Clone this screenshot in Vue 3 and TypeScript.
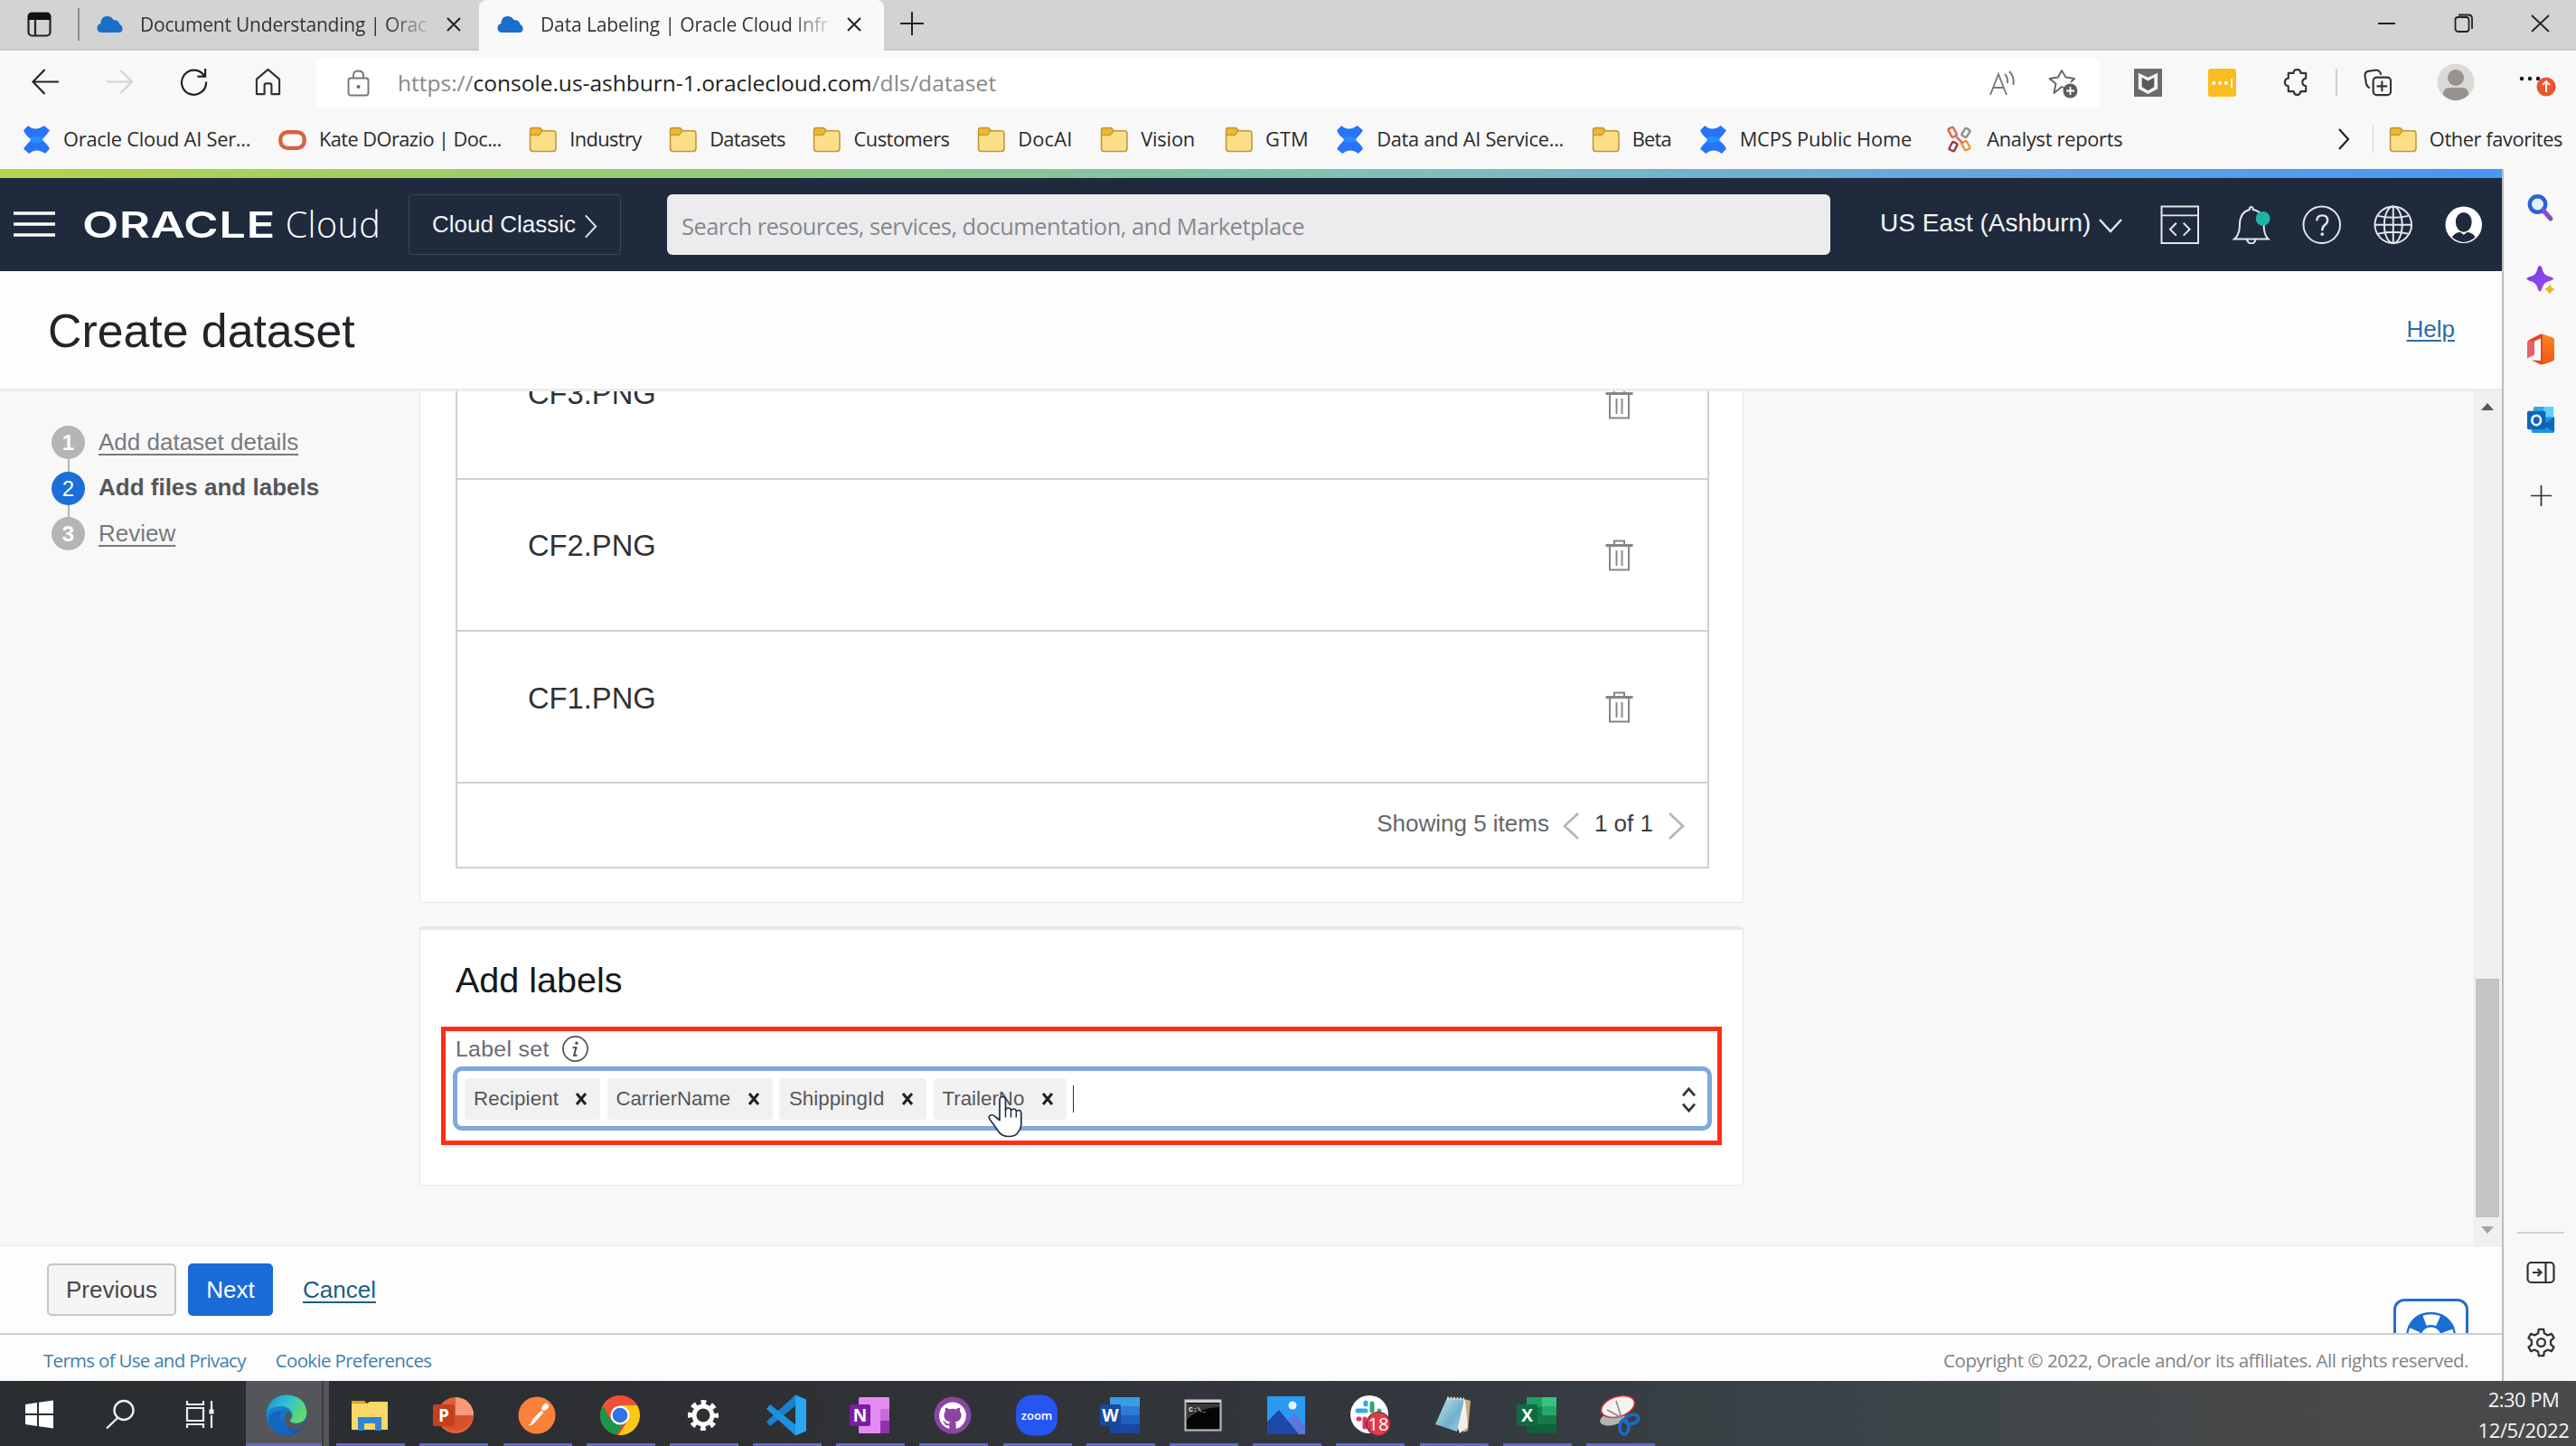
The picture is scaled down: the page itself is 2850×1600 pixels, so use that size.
<script setup lang="ts">
import type { Directive } from 'vue'

interface Bookmark {
  icon: 'confluence' | 'oracle' | 'folder' | 'analyst'
  text: string
  width: number
  gapAfter?: 'small' | 'wide'
}

interface Tag {
  text: string
  textWidth: number
  width: number
}

/* Tracks a line of text so that it fills the given measure. */
const vFit: Directive<HTMLElement, number> = {
  mounted(el, binding) {
    const length = (el.textContent || '').length
    el.style.letterSpacing = `${(binding.value - el.offsetWidth) / length}px`
  },
}

const bookmarks: Bookmark[] = [
  { icon: 'confluence', text: 'Oracle Cloud AI Ser...', width: 207 },
  { icon: 'oracle', text: 'Kate DOrazio | Doc...', width: 202 },
  { icon: 'folder', text: 'Industry', width: 79 },
  { icon: 'folder', text: 'Datasets', width: 84 },
  { icon: 'folder', text: 'Customers', width: 106 },
  { icon: 'folder', text: 'DocAI', width: 60 },
  { icon: 'folder', text: 'Vision', width: 60, gapAfter: 'small' },
  { icon: 'folder', text: 'GTM', width: 47 },
  { icon: 'confluence', text: 'Data and AI Service...', width: 207 },
  { icon: 'folder', text: 'Beta', width: 43 },
  { icon: 'confluence', text: 'MCPS Public Home', width: 191, gapAfter: 'wide' },
  { icon: 'analyst', text: 'Analyst reports', width: 150 },
]

const files: string[] = ['CF3.PNG', 'CF2.PNG', 'CF1.PNG']

const tags: Tag[] = [
  { text: 'Recipient', textWidth: 94, width: 150 },
  { text: 'CarrierName', textWidth: 127, width: 183 },
  { text: 'ShippingId', textWidth: 105, width: 163 },
  { text: 'TrailerNo', textWidth: 91, width: 147 },
]

const cogPath = (teeth: number, outer: number, inner: number): string => {
  const points: string[] = []
  const step = (Math.PI * 2) / teeth
  for (let i = 0; i < teeth; i++) {
    const mid = i * step - Math.PI / 2
    const corners: [number, number][] = [
      [-0.3, inner],
      [-0.17, outer],
      [0.17, outer],
      [0.3, inner],
    ]
    for (const [offset, radius] of corners) {
      const angle = mid + offset * step
      points.push(`${(16 + radius * Math.cos(angle)).toFixed(2)} ${(16 + radius * Math.sin(angle)).toFixed(2)}`)
    }
  }
  return `M${points.join('L')}Z`
}
const settingsCog = cogPath(6, 14.5, 10.5)
</script>

<template>
  <div class="screen">
    <svg class="defs" width="0" height="0">
      <defs>
        <linearGradient id="edgeA" x1="0" y1="0" x2="1" y2="0.4"><stop offset="0" stop-color="#1b8fd8" /><stop offset=".55" stop-color="#35c1d0" /><stop offset="1" stop-color="#5fdc6a" /></linearGradient>
        <linearGradient id="edgeB" x1="0" y1="0" x2="0.6" y2="1"><stop offset="0" stop-color="#1a9be0" /><stop offset="1" stop-color="#1156b4" /></linearGradient>
        <linearGradient id="spark" x1="0" y1="0" x2="1" y2="1"><stop offset="0" stop-color="#6a3fe0" /><stop offset="1" stop-color="#a24cf0" /></linearGradient>
        <linearGradient id="office" x1="0" y1="0" x2="0" y2="1"><stop offset="0" stop-color="#f98a1c" /><stop offset="1" stop-color="#f0531c" /></linearGradient>
        <linearGradient id="note" x1="0" y1="0" x2="1" y2="1"><stop offset="0" stop-color="#c8e4ee" /><stop offset=".6" stop-color="#6fb0cc" /><stop offset="1" stop-color="#a8d4e4" /></linearGradient>
        <symbol id="i-confluence" viewBox="0 0 30 30">
          <path d="M1 5 6 0c4 4 10 5 17 0l6 5C24 13 20 15 15 15 9 15 4 12 1 5Z" fill="#2675f5" />
          <path d="M29 25l-5 5c-5-4-11-5-17 0l-6-5c5-8 9-10 14-10 6 0 11 3 14 10Z" fill="#2675f5" />
          <path d="M7 13 Q15 10 23 13 Q20 15 23 17 Q15 20 7 17 Q10 15 7 13Z" fill="#2a8cff" />
        </symbol>
        <symbol id="i-oracle" viewBox="0 0 30 30">
          <rect x="2.200" y="7" width="25.600" height="17" rx="7.500" fill="none" stroke="#d9603f" stroke-width="4.200" />
        </symbol>
        <symbol id="i-folder" viewBox="0 0 30 30">
          <path d="M1.500 5q0-2.500 2.500-2.500h8l3 3h11q3 0 3 3v16q0 3-3 3H4.500q-3 0-3-3Z" fill="#fbdf86" stroke="#c0953a" stroke-width="1.500" />
          <path d="M1.500 9V5q0-2.500 2.500-2.500h7.500l3 3L11 10H1.500Z" fill="#efb92f" stroke="#c0953a" stroke-width="1.200" />
        </symbol>
        <symbol id="i-analyst" viewBox="0 0 30 30">
          <g fill="none" stroke-width="2.300">
            <rect x="4" y="2" width="6" height="10" rx="1.500" transform="rotate(-28 7 7)" stroke="#e0664a" />
            <rect x="18" y="3" width="6" height="9" rx="1.500" transform="rotate(32 21 8)" stroke="#8e8e90" />
            <rect x="5" y="18" width="6" height="9" rx="1.500" transform="rotate(28 8 22)" stroke="#9b3a44" />
            <rect x="18" y="17" width="6" height="9" rx="1.500" transform="rotate(-28 21 21)" stroke="#f0952f" />
            <path d="m11 12 7 7" stroke="#e0664a" />
          </g>
        </symbol>
        <symbol id="i-cloud" viewBox="0 0 30 20">
          <path d="M6 19q-5 0-5-5 0-4 4-5Q5 1 12 1q5 0 7 4 6 0 7 5 3 1 3 5 0 4-4 4Z" fill="#1b6fc8" />
        </symbol>
        <symbol id="i-x" viewBox="0 0 16 16">
          <path d="M1 1l14 14M15 1 1 15" stroke="#222" stroke-width="2" fill="none" />
        </symbol>
        <symbol id="i-trash" viewBox="0 0 30 36">
          <g fill="none" stroke="#868686">
            <path d="M0 6.500h30" stroke-width="3" />
            <path d="M9.500 5V1.500h11V5" stroke-width="2" />
            <path d="M4.500 7v26.500h21V7" stroke-width="2" />
            <path d="M12 12v17M18 12v17" stroke-width="1.900" />
          </g>
        </symbol>
      </defs>
    </svg>

    <!-- Tab strip -->
    <div class="tabs">
      <svg class="workspace" viewBox="0 0 28 28"><rect x="1.500" y="1.500" width="24" height="25" rx="4" fill="none" stroke="#222" stroke-width="2.200" /><path d="M1 9V5q0-4 4-4h17q4 0 4 4v4Z" fill="#111" /><path d="M9 8v18" stroke="#222" stroke-width="2.200" /></svg>
      <i class="tab-rule"></i>
      <div class="tab first">
        <svg class="cloud"><use href="#i-cloud" /></svg>
        <div class="tab-text"><span v-fit="317">Document Understanding | Orac</span></div>
        <svg class="tab-x"><use href="#i-x" /></svg>
      </div>
      <div class="tab active">
        <svg class="cloud"><use href="#i-cloud" /></svg>
        <div class="tab-text"><span v-fit="318">Data Labeling | Oracle Cloud Infr</span></div>
        <svg class="tab-x"><use href="#i-x" /></svg>
      </div>
      <svg class="new-tab" viewBox="0 0 26 26"><path d="M13 0v26M0 13h26" stroke="#222" stroke-width="2" /></svg>
      <div class="window-controls">
        <svg viewBox="0 0 22 22"><path d="M1 11h19" stroke="#222" stroke-width="2" /></svg>
        <svg viewBox="0 0 22 22"><rect x="1.500" y="4" width="15" height="16" rx="3" fill="none" stroke="#222" stroke-width="1.800" /><path d="M5 1.500h11q4 0 4 4V17" fill="none" stroke="#222" stroke-width="1.800" /></svg>
        <svg viewBox="0 0 22 22"><path d="M1 2l19 18M20 2 1 20" stroke="#222" stroke-width="1.800" /></svg>
      </div>
    </div>

    <!-- Address row -->
    <div class="toolbar">
      <div class="nav">
        <svg viewBox="0 0 32 32"><path d="M31 16H2M15 2 1.500 16 15 30" fill="none" stroke="#222" stroke-width="2.200" /></svg>
        <svg viewBox="0 0 32 32"><path d="M1 16h29M17 3l13 13-13 13" fill="none" stroke="#d2d2d2" stroke-width="2.200" /></svg>
        <svg viewBox="0 0 32 32"><path d="M28 9.500A14 14 0 1 0 30 16M29 1v9h-9" fill="none" stroke="#222" stroke-width="2.300" /></svg>
        <svg viewBox="0 0 32 32"><path d="M3 13 16 2l13 11v17h-9V20q0-2-2-2h-4q-2 0-2 2v10H3Z" fill="none" stroke="#333" stroke-width="2.200" stroke-linejoin="round" /></svg>
      </div>
      <div class="address">
        <svg class="lock" viewBox="0 0 26 30"><rect x="1.500" y="9.500" width="22" height="19" rx="2.500" fill="none" stroke="#777" stroke-width="1.900" /><path d="M7 9V6.500q0-5 5.500-5t5.500 5V9" fill="none" stroke="#777" stroke-width="1.900" /><circle cx="12.500" cy="19" r="2" fill="#666" /></svg>
        <div class="url"><span v-fit="84" class="dim">https://</span><span v-fit="441">console.us-ashburn-1.oraclecloud.com</span><span v-fit="138" class="dim">/dls/dataset</span></div>
        <svg class="read" viewBox="0 0 30 28"><path d="M1 27 10 4l9 23M4.500 19h11" fill="none" stroke="#777" stroke-width="1.900" /><path d="M17 4q4 4 3 10M22 1q6 6 4.500 15" fill="none" stroke="#777" stroke-width="1.900" /></svg>
        <svg class="star" viewBox="0 0 34 32"><path d="M19 21l-4-2-8.500 7 2-10.500L1.500 10l9.500-1.500L15 1l4.500 7.500L29 10l-4 4" fill="none" stroke="#666" stroke-width="1.900" stroke-linejoin="round" /><circle cx="24.500" cy="23.500" r="8" fill="#5d5d5d" /><path d="M24.500 19v9M20 23.500h9" stroke="#fff" stroke-width="1.800" /></svg>
      </div>
      <div class="extensions">
        <svg class="ext" viewBox="0 0 32 32"><rect width="32" height="32" fill="#6b6b6b" /><path d="M5 5l11 5 11-5v18l-11 6L5 23Z" fill="#f4f4f4" /><path d="M9 10l7 4 7-4v11l-7 4-7-4Z" fill="#5a5a5a" /></svg>
        <svg class="ext" viewBox="0 0 32 32"><rect width="32" height="32" rx="3" fill="#fbbc1d" /><g fill="#fff"><circle cx="6.500" cy="16.500" r="2.200" /><circle cx="13.500" cy="16.500" r="2.200" /><circle cx="20.500" cy="16.500" r="2.200" /><rect x="26" y="11" width="1.800" height="11" /></g></svg>
        <svg class="ext" viewBox="0 0 32 32"><path d="M7 5h6q0-4 4-4t4 4h6v6q-4 1-4 4.500t4 4.500v6h-6q-1 4-4 4t-4-4H7v-6q-4-.5-4-4.500T7 11Z" fill="none" stroke="#333" stroke-width="2.200" stroke-linejoin="round" /></svg>
        <i class="ext-rule"></i>
        <svg class="ext" viewBox="0 0 32 32"><rect x="11" y="10" width="20" height="20" rx="4" fill="none" stroke="#333" stroke-width="2.200" /><path d="M21 14v12M15 20h12M7 22Q4 21 3 17L1.500 8q0-4 3-5l10-1.500q4 0 5.500 5.500" fill="none" stroke="#333" stroke-width="2.200" /></svg>
        <svg class="profile" viewBox="0 0 42 42"><circle cx="21" cy="21" r="20.500" fill="#dcd9d6" /><circle cx="21" cy="16" r="9" fill="#96928e" /><path d="M7 35q0-8 7-8h14q7 0 7 8-14 12-28 0Z" fill="#96928e" /></svg>
        <svg class="more" viewBox="0 0 44 32"><g fill="#111"><circle cx="3" cy="12" r="2.200" /><circle cx="12" cy="12" r="2.200" /><circle cx="21" cy="12" r="2.200" /></g><circle cx="30" cy="21" r="10.500" fill="#f0542d" /><path d="M30 27V15.500M26 19l4-4 4 4" stroke="#fff" stroke-width="1.900" fill="none" /></svg>
      </div>
    </div>

    <!-- Bookmarks -->
    <div class="bookmarks">
      <div v-for="b in bookmarks" :key="b.text" class="bookmark" :class="b.gapAfter">
        <svg class="bm-icon"><use :href="'#i-' + b.icon" /></svg>
        <span v-fit="b.width">{{ b.text }}</span>
      </div>
      <svg class="bm-more" viewBox="0 0 14 24"><path d="M2 1l10 11L2 23" fill="none" stroke="#222" stroke-width="2.200" /></svg>
      <i class="bm-rule"></i>
      <div class="bookmark">
        <svg class="bm-icon"><use href="#i-folder" /></svg>
        <span v-fit="147">Other favorites</span>
      </div>
    </div>

    <div class="body">
      <div class="page">
        <div class="strip"></div>
        <header class="header">
          <svg class="menu" viewBox="0 0 46 30"><path d="M0 3h46M0 15h46M0 27h46" stroke="#fff" stroke-width="3.600" /></svg>
          <div class="logo">
            <span v-fit="161" class="logo-word">ORACLE</span>
            <span v-fit="105" class="logo-cloud">Cloud</span>
          </div>
          <div class="classic">Cloud Classic<svg viewBox="0 0 16 28"><path d="M2 1l12 13L2 27" fill="none" stroke="#e8eaee" stroke-width="2" /></svg></div>
          <div class="search"><span v-fit="689">Search resources, services, documentation, and Marketplace</span></div>
          <div class="region">US East (Ashburn)<svg viewBox="0 0 28 16"><path d="M2 1l12 13L26 1" fill="none" stroke="#e8eaee" stroke-width="2.400" /></svg></div>
          <div class="head-icons">
            <svg viewBox="0 0 44 44"><g fill="none" stroke="#e4e7ec" stroke-width="2"><rect x="1.500" y="1.500" width="41" height="41" /><path d="M1 11.500h42M18 20l-7 7 7 7M26 20l7 7-7 7" /></g></svg>
            <svg viewBox="0 0 44 44"><g fill="none" stroke="#e4e7ec" stroke-width="2"><path d="M3 38h38q-5-5-5-16Q36 7 24 5q0-3-2-3t-2 3Q9 8 9 22q0 11-6 16Z" /><path d="M17 38q1 5 5 5t5-5" /></g><circle cx="35" cy="15" r="8" fill="#1fb5a6" /></svg>
            <svg viewBox="0 0 44 44"><circle cx="22" cy="22" r="20.500" fill="none" stroke="#e4e7ec" stroke-width="2" /><path d="M16.500 17.500q0-6 6-6t6 5.500q0 3-3.500 5.500-2.500 2-2.500 6" fill="none" stroke="#e4e7ec" stroke-width="2.400" /><circle cx="22.500" cy="32.500" r="1.800" fill="#e4e7ec" /></svg>
            <svg viewBox="0 0 44 44"><g fill="none" stroke="#e4e7ec" stroke-width="2"><circle cx="22" cy="22" r="20.500" /><ellipse cx="22" cy="22" rx="10" ry="20.500" /><path d="M22 1.500v41M1.500 22h41M5 12q17 4 34 0M5 32q17-4 34 0" /></g></svg>
            <svg viewBox="0 0 44 44"><circle cx="22" cy="22" r="20.500" fill="#fff" /><ellipse cx="22" cy="19" rx="9" ry="11" fill="#1f2a3c" /><path d="M9 36q2-5 9-6l4 3 4-3q7 1 9 6-13 11-26 0Z" fill="#1f2a3c" /></svg>
          </div>
        </header>

        <div class="title-bar">
          <h1>Create dataset</h1>
          <a class="help">Help</a>
        </div>

        <div class="content">
          <nav class="steps">
            <div class="step"><b>1</b><a>Add dataset details</a></div>
            <i class="link"></i>
            <div class="step current"><b>2</b><a>Add files and labels</a></div>
            <i class="link"></i>
            <div class="step"><b>3</b><a>Review</a></div>
          </nav>
          <main class="cards">
            <section class="card files">
              <div class="table">
                <div v-for="file in files" :key="file" class="row">
                  <span>{{ file }}</span>
                  <svg class="trash"><use href="#i-trash" /></svg>
                </div>
                <div class="pager">
                  <span class="showing">Showing 5 items</span>
                  <svg viewBox="0 0 18 30"><path d="M17 1 2 15l15 14" fill="none" stroke="#b4b4b4" stroke-width="2.600" /></svg>
                  <span class="count">1 of 1</span>
                  <svg viewBox="0 0 18 30"><path d="M1 1l15 14L1 29" fill="none" stroke="#b4b4b4" stroke-width="2.600" /></svg>
                </div>
              </div>
            </section>
            <section class="card labels">
              <h2>Add labels</h2>
              <div class="highlight">
                <div class="field-label"><span v-fit="104">Label set</span>
                  <svg viewBox="0 0 32 32"><circle cx="16" cy="16" r="14" fill="none" stroke="#555" stroke-width="1.800" /><circle cx="17.500" cy="9.500" r="1.700" fill="#444" /><path d="M13 14.500h4l-2.500 9h3.500" fill="none" stroke="#444" stroke-width="1.900" /></svg>
                </div>
                <div class="input">
                  <div v-for="tag in tags" :key="tag.text" class="tag" :style="{ width: tag.width + 'px' }">
                    <span v-fit="tag.textWidth">{{ tag.text }}</span>
                    <svg viewBox="0 0 14 14"><path d="M2 1l10 12M12 1 2 13" stroke="#222" stroke-width="3" /></svg>
                  </div>
                  <i class="caret"></i>
                  <svg class="spin" viewBox="0 0 18 30"><path d="M2 10l7-8 7 8M2 20l7 8 7-8" fill="none" stroke="#333" stroke-width="2.900" /></svg>
                  <svg class="pointer" viewBox="0 0 40 46"><path d="M14 27V5q0-4 3.300-4T20.500 5v11q0-2.500 3-2.500 2.700 0 3.200 3 .5-2 2.800-2 2.500 0 3 3 .6-1.500 2.700-1.500 2.600 0 2.600 4v10q0 6-3 9.500-2 5.500-11.500 5.500-7 0-11-6Q9 34 3 26q-2-3.500 1-4.500 3-1 5.500 2Z" fill="#fff" stroke="#222c48" stroke-width="1.700" stroke-linejoin="round" /><path d="M20.500 15v9M26.500 17v7M32.300 18v6" stroke="#222c48" stroke-width="1.500" /></svg>
                </div>
              </div>
            </section>
          </main>
          <div class="scrollbar">
            <svg viewBox="0 0 14 8"><path d="M0 8 7 0l7 8Z" fill="#555" /></svg>
            <div class="thumb"></div>
            <svg viewBox="0 0 14 8"><path d="M0 0l7 8 7-8Z" fill="#a3a3a3" /></svg>
          </div>
        </div>

        <div class="actions">
          <button class="btn">Previous</button>
          <button class="btn primary">Next</button>
          <a class="cancel">Cancel</a>
          <div class="support">
            <svg viewBox="0 0 58 58"><circle cx="29" cy="29" r="20" fill="none" stroke="#1a6fd4" stroke-width="17" stroke-dasharray="15.700 15.700" stroke-dashoffset="-7.850" /><circle cx="29" cy="29" r="27" fill="none" stroke="#1a6fd4" stroke-width="2.400" /><circle cx="29" cy="29" r="12.500" fill="#fff" stroke="#1a6fd4" stroke-width="2.400" /></svg>
          </div>
        </div>

        <footer class="footer">
          <a v-fit="224">Terms of Use and Privacy</a>
          <a v-fit="173">Cookie Preferences</a>
          <span v-fit="581" class="copyright">Copyright © 2022, Oracle and/or its affiliates. All rights reserved.</span>
        </footer>
      </div>

      <aside class="side">
        <svg class="s-search" viewBox="0 0 32 32"><circle cx="12.500" cy="12" r="8.700" fill="#e4f0fb" stroke="#2b62d4" stroke-width="4.400" /><path d="M19 19l8 9" stroke="#7c50d0" stroke-width="5" stroke-linecap="round" /></svg>
        <svg class="s-spark" viewBox="0 0 34 34"><path d="M16 1q2 0 3 5 1.500 5 6 6.500 6 1.500 6 3t-6 3q-4.500 1.500-6 6-1.500 5-3 5t-3-5q-1.500-4.500-6-6-5.500-1.500-5.500-3t5.500-3q4.500-1.500 6-6.500 1-5 3-5Z" fill="url(#spark)" /><path d="M27 21q1.500 5 6 6-4.500 1.500-6 6-1.500-4.500-6-6 4.500-1.500 6-6Z" fill="#f0b429" /></svg>
        <svg class="s-office" viewBox="0 0 34 36"><path d="M17 1l13 4q2 1 2 3v20q0 2-2 3l-13 4-10-5 10 .5V6l-7 3v15L2 27V11q0-2 2-3.500Z" fill="#e0482a" /><path d="M19 1l11 4q2 1 2 3v20q0 2-2 3l-11 4Z" fill="url(#office)" /><path d="M10 10v14l-8 4V11q0-2 2-3Z" fill="#e8606a" /></svg>
        <svg class="s-outlook" viewBox="0 0 34 34"><rect x="8" y="2" width="23" height="22" rx="2" fill="#35a8ea" /><rect x="20" y="2" width="11" height="13" fill="#5fd0f8" /><path d="M6 14l26 0v16q0 2-2 2H8q-2 0-2-2Z" fill="#1a94e4" /><path d="M32 14 19 23l13 8Z" fill="#1266b4" /><rect x="1" y="7" width="21" height="21" rx="2" fill="#0f64b8" /><ellipse cx="11.500" cy="17.500" rx="5" ry="5.500" fill="none" stroke="#fff" stroke-width="2.600" /></svg>
        <svg class="s-plus" viewBox="0 0 24 24"><path d="M12 0v24M0 12h24" stroke="#333" stroke-width="1.800" /></svg>
        <i class="s-rule"></i>
        <svg class="s-toggle" viewBox="0 0 32 26"><rect x="1.500" y="2" width="29" height="22" rx="4" fill="none" stroke="#333" stroke-width="2.200" /><path d="M21.500 2v22M7 13h9M12.500 9l4 4-4 4" fill="none" stroke="#333" stroke-width="2.200" /></svg>
        <svg class="s-gear" viewBox="0 0 32 32"><path :d="settingsCog" fill="none" stroke="#333" stroke-width="2.200" stroke-linejoin="round" /><circle cx="16" cy="16" r="4.300" fill="none" stroke="#333" stroke-width="2.200" /></svg>
      </aside>
    </div>

    <!-- Taskbar -->
    <div class="taskbar">
      <div class="sys"><svg viewBox="0 0 48 48"><path d="M8 13l13-2v12H8ZM23 10.700 39 8.500V23H23ZM8 25h13v12L8 35ZM23 25h16v14.500l-16-2.200Z" fill="#fff" /></svg></div>
      <div class="sys"><svg viewBox="0 0 48 48"><circle cx="28" cy="19.500" r="10.500" fill="none" stroke="#eee" stroke-width="2.400" /><path d="M21 28 9 39.500" stroke="#eee" stroke-width="2.400" /></svg></div>
      <div class="sys"><svg viewBox="0 0 48 48"><path d="M9 9v4h18V9M9 39v-4h18v4M9 17h18v14H9ZM36 9v10M36 25v14" fill="none" stroke="#eee" stroke-width="2.200" /><rect x="33.500" y="18.500" width="5" height="5" fill="#fff" /></svg></div>
      <div class="app focused">
        <svg viewBox="0 0 48 48"><circle cx="24" cy="24" r="22.500" fill="url(#edgeB)" /><path d="M2 20Q6 2 24 1.500q21 1 22.500 20Q46 32 35 33q-8 0-7-4 3-3 2-7-3-8-12-8Q7 14 2 20Z" fill="url(#edgeA)" /><path d="M28 29q-1 4 7 4 6 0 9.500-3-2 6-7 10Q22 40 22 27q0-5 4-7 4 2 4 5 0 2-2 4Z" fill="#54565a" /><path d="M17 22q-3 18 17 22-8 3-16 .5Q2 38 5 25q4-8 17-5Z" fill="#1464c0" /></svg>
      </div>
      <div class="app"><svg viewBox="0 0 48 48"><path d="M4 8h14l4 4H4Z" fill="#e0a320" /><path d="M4 11h17l3-2h20v31H4Z" fill="#fbd668" /><path d="M11 26h26v15h-7v-8H18v8h-7Z" fill="#2f86d6" /></svg></div>
      <div class="app"><svg viewBox="0 0 48 48"><circle cx="27" cy="24" r="20" fill="#e0603a" /><path d="M27 4a20 20 0 0 1 20 20H27Z" fill="#f79a78" /><path d="M8 24h38a20 20 0 0 1-38 5Z" fill="#d5522c" /><rect x="2" y="12" width="24" height="24" rx="2" fill="#c4401e" /><text x="14" y="31" class="glyph g20">P</text></svg></div>
      <div class="app"><svg viewBox="0 0 48 48"><circle cx="24" cy="24" r="20.500" fill="#f9813a" /><path d="M34 11q4 1 2 5-2 3-6 2-1-5 4-7ZM29 19l2 2-9 10-5 4 3-7ZM15 35l5-2" fill="#fff" stroke="#fff" stroke-width="1" /></svg></div>
      <div class="app"><svg viewBox="0 0 48 48"><circle cx="24" cy="24" r="22" fill="#e8432f" /><path d="M24 24 4.900 13A22 22 0 0 0 20 45.600l9-14Z" fill="#18964a" /><path d="M24 24l10 4-12 18a22 22 0 0 0 21-33H24Z" fill="#fbc816" /><path d="M4.900 13A22 22 0 0 1 43 13H24L14 30Z" fill="#ee5138" /><circle cx="24" cy="24" r="10.500" fill="#fff" /><circle cx="24" cy="24" r="8.300" fill="#2f74e4" /></svg></div>
      <div class="app"><svg viewBox="0 0 48 48"><circle cx="24" cy="24" r="10" fill="none" stroke="#fff" stroke-width="5" /><circle cx="24" cy="24" r="14.500" fill="none" stroke="#fff" stroke-width="5" stroke-dasharray="5.700 5.690" stroke-dashoffset="2.850" /></svg></div>
      <div class="app"><svg viewBox="0 0 48 48"><path d="M34 1.500 2 31l4 5L36 12Z" fill="#1b80cc" /><path d="M34 46.500 2 17l4-5 30 24Z" fill="#1e90e0" /><path d="M34 1.500l12 5v35l-12 5Z" fill="#2aa6f2" /></svg></div>
      <div class="app"><svg viewBox="0 0 48 48"><rect x="12" y="4" width="34" height="40" rx="1.500" fill="#e38cf0" /><rect x="36" y="17" width="10" height="13" fill="#c66ad8" /><rect x="36" y="30" width="10" height="14" fill="#9030b0" /><rect x="2" y="12" width="23" height="24" rx="2" fill="#7a1fa0" /><text x="13.500" y="31" class="glyph g20">N</text></svg></div>
      <div class="app"><svg viewBox="0 0 48 48"><circle cx="24" cy="24" r="20.500" fill="#8a45a4" /><path transform="translate(9 9.500) scale(1.870)" fill="#fff" d="M8 0C3.580 0 0 3.580 0 8c0 3.540 2.290 6.530 5.470 7.590.4.070.55-.17.55-.38 0-.19-.01-.82-.01-1.490-2.010.37-2.530-.49-2.690-.94-.09-.23-.48-.94-.82-1.130-.28-.15-.68-.52-.01-.53.63-.01 1.080.58 1.230.82.72 1.210 1.870.87 2.330.66.07-.52.28-.87.51-1.070-1.780-.2-3.640-.89-3.640-3.950 0-.87.31-1.590.82-2.150-.08-.2-.36-1.020.08-2.120 0 0 .67-.21 2.200.82.64-.18 1.320-.27 2-.27.68 0 1.360.09 2 .27 1.530-1.040 2.200-.82 2.200-.82.44 1.100.16 1.920.08 2.120.51.56.82 1.270.82 2.150 0 3.070-1.870 3.750-3.650 3.950.29.25.54.73.54 1.480 0 1.070-.01 1.930-.01 2.200 0 .21.15.46.55.38A8.010 8.010 0 0 0 16 8c0-4.420-3.580-8-8-8Z" /></svg></div>
      <div class="app"><svg viewBox="0 0 48 48"><rect x="1" y="1.500" width="46" height="45" rx="18" fill="#2556f0" /><text x="24" y="28.500" class="glyph zoom">zoom</text></svg></div>
      <div class="app"><svg viewBox="0 0 48 48"><rect x="13" y="4" width="33" height="10" fill="#3b9cea" /><rect x="13" y="14" width="33" height="10" fill="#2b7cd3" /><rect x="13" y="24" width="33" height="10" fill="#1f5fc0" /><rect x="13" y="34" width="33" height="10" fill="#1a46a0" /><rect x="2" y="12" width="23" height="24" rx="2" fill="#164a9c" /><text x="13.500" y="31" class="glyph g20">W</text></svg></div>
      <div class="app"><svg viewBox="0 0 48 48"><rect x="4.500" y="7.500" width="39" height="33" fill="#050505" stroke="#b4b6b8" stroke-width="2.200" /><path d="M6 11h36v4Q18 16 6 29Z" fill="#3b3b3b" /><path d="M4.500 8.500h39" stroke="#d0d0d0" stroke-width="3" /><text x="8" y="20" class="cmd">C:\_</text></svg></div>
      <div class="app"><svg viewBox="0 0 48 48"><rect x="3" y="3" width="42" height="42" fill="#2a9af0" /><circle cx="31" cy="13" r="4.500" fill="#e4f6ff" /><path d="M25 31l8-9 12 13v10H25Z" fill="#5a78dc" /><path d="M3 31l13-13 22 27H3Z" fill="#1e48a8" /></svg></div>
      <div class="app"><svg viewBox="0 0 48 48"><circle cx="24" cy="23" r="21" fill="#fff" /><g fill="none" stroke-width="5" stroke-linecap="round"><path d="M20 10v2M11 19h9" stroke="#36a8de" /><path d="M27 11v8M35 19v0" stroke="#2ba86c" /><path d="M12 28h1M19 28v9" stroke="#e0335f" /></g><circle cx="34" cy="33.500" r="13" fill="#e03a50" stroke="#7a2634" stroke-width="1.200" /><text x="34" y="41" class="glyph badge">18</text></svg></div>
      <div class="app"><svg viewBox="0 0 48 48"><path d="M36 6l7 2-3 33-5 2Z" fill="#c8ad7c" /><path d="M17 5l20 2 3 30-9 7Z" fill="#f1f1ec" /><path d="M17 5l19 1-8 36-24-8Z" fill="url(#note)" /><path d="M17 5l19 1" stroke="#ddd" stroke-width="3" stroke-dasharray="2 1.500" /></svg></div>
      <div class="app"><svg viewBox="0 0 48 48"><rect x="13" y="4" width="33" height="40" fill="#17794a" /><rect x="13" y="4" width="17" height="11" fill="#1fa065" /><rect x="30" y="4" width="16" height="20" fill="#35c481" /><rect x="30" y="14" width="16" height="10" fill="#24a868" /><rect x="13" y="34" width="33" height="10" fill="#11603a" /><rect x="2" y="12" width="23" height="24" rx="2" fill="#0f6c40" /><text x="13.500" y="31" class="glyph g20">X</text></svg></div>
      <div class="app"><svg viewBox="0 0 48 48"><ellipse cx="16" cy="28" rx="14" ry="7" fill="#b4b4b4" transform="rotate(-12 16 28)" /><ellipse cx="22" cy="14.500" rx="19" ry="11" fill="#f5f3f2" stroke="#d8343a" stroke-width="1.600" transform="rotate(-18 22 14.500)" /><path d="M10 18l15 8M20 8l6 19" stroke="#8a8a8a" stroke-width="1.600" /><g fill="none" stroke="#1c6cc0" stroke-width="3.600"><ellipse cx="37" cy="28.500" rx="8" ry="5" transform="rotate(-15 37 28.500)" /><ellipse cx="29" cy="37" rx="5" ry="8" /></g></svg></div>
      <div class="clock"><span v-fit="78">2:30 PM</span><span v-fit="101">12/5/2022</span></div>
    </div>
  </div>
</template>

<style>
body { margin: 0; }
</style>

<style scoped>
.screen { width: 2850px; height: 1600px; overflow: hidden; display: flex; flex-direction: column; font-family: "Liberation Sans", Arial, sans-serif; background: #f8f8f8; color: #222; }
.defs { position: absolute; }
svg { display: block; flex: none; }
span, a { white-space: pre; flex: none; }

.tabs { height: 56px; flex: none; display: flex; background: #d3d3d3; box-shadow: inset 0 -2px 1px #c8c8c8; font: 21px/28px "Open Sans", sans-serif; }
.workspace { width: 28px; height: 28px; margin: 13px 0 0 30px; }
.tab-rule { width: 2px; height: 36px; margin: 9px 0 0 28px; background: #8d8d8d; }
.tab { display: flex; box-sizing: border-box; height: 56px; padding-top: 12px; }
.tab.first { width: 442px; padding-left: 18px; }
.tab.active { width: 448px; padding-left: 19px; background: #f9f9f9; border-radius: 8px 8px 0 0; }
.cloud { width: 31px; height: 20px; margin-top: 5px; }
.tab-text { width: 319px; margin-left: 18px; color: #333; display: flex; padding-top: 1px; -webkit-mask-image: linear-gradient(90deg, #000 86%, rgba(0, 0, 0, 0.15)); mask-image: linear-gradient(90deg, #000 86%, rgba(0, 0, 0, 0.15)); }
.tab-x { width: 16px; height: 16px; margin: 7px 0 0 20px; }
.new-tab { width: 26px; height: 26px; margin: 13px 0 0 18px; }
.window-controls { margin: 15px 28px 0 auto; display: flex; gap: 63px; }
.window-controls svg { width: 22px; height: 22px; }

.toolbar { height: 66px; flex: none; display: flex; }
.nav { display: flex; width: 349px; box-sizing: border-box; padding: 19px 0 0 35px; gap: 51px; }
.nav svg { width: 31px; height: 31px; }
.address { width: 1974px; height: 55px; margin-top: 8px; border-radius: 6px; background: #fff; display: flex; align-items: center; }
.lock { width: 26px; height: 30px; margin-left: 35px; }
.url { display: flex; margin-left: 30px; font: 24.500px/34px "Open Sans", sans-serif; color: #222; }
.dim { color: #888; }
.read { width: 30px; height: 28px; margin-left: auto; }
.star { width: 34px; height: 32px; margin: 2px 23px 0 35px; }
.extensions { display: flex; align-items: center; height: 70px; margin-left: 38px; }
.ext { width: 31px; height: 31px; margin-right: 51px; }
.ext:nth-child(3) { margin-right: 28px; }
.ext-rule { width: 2px; height: 30px; background: #d0d0d0; margin-right: 29px; }
.ext:nth-child(5) { margin-right: 50px; }
.profile { width: 42px; height: 42px; }
.more { width: 44px; height: 32px; margin: 0 0 0 49px; }

.bookmarks { height: 65px; flex: none; display: flex; align-items: center; box-sizing: border-box; padding: 0 15px 2px 25px; font: 21.800px/32px "Open Sans", sans-serif; color: #2a2a2a; }
.bookmark { display: flex; align-items: center; margin-right: 30.700px; }
.bookmark.small { margin-right: 33px; }
.bookmark.wide { margin-right: 38px; }
.bm-icon { width: 31px; height: 31px; margin: 2px 14px 0 0; }
.bm-more { width: 14px; height: 24px; margin-left: auto; }
.bm-rule { width: 1px; height: 30px; background: #d4d4d4; margin: 0 17px 0 25px; }
.bookmark:last-child { margin-right: 0; }

.body { height: 1341px; flex: none; display: flex; }
.page { width: 2768px; display: flex; flex-direction: column; background: #fdfdfd; }
.strip { height: 10px; flex: none; background: linear-gradient(90deg, #b2d44c 0%, #98cb72 25%, #86c59a 42%, #7ec0ba 57%, #66a9dc 76%, #4a95f6 100%); }
.header { height: 103px; flex: none; display: flex; align-items: center; background: #1f2a3c; color: #f3f4f6; }
.menu { width: 46px; height: 30px; margin: -2px 0 0 15px; }
.logo { width: 335px; height: 60px; margin: -2px 0 0 30px; display: flex; line-height: 60px; }
.logo-word { font-family: Inter, sans-serif; font-weight: 600; font-size: 39.500px; color: #fff; transform: scaleX(1.33); transform-origin: 0 50%; margin: 1px 64px 0 0; }
.logo-cloud { font-family: "Open Sans", sans-serif; font-weight: 300; font-size: 39.500px; color: #fff; }
.classic { width: 235px; height: 67px; box-sizing: border-box; margin-left: 26px; border: 1px solid #3b4658; border-radius: 3px; padding-left: 25px; display: flex; align-items: center; font-size: 26px; gap: 9px; }
.classic svg { width: 15px; height: 27px; margin-top: 3px; }
.search { width: 1287px; height: 67px; box-sizing: border-box; margin-left: 51px; padding: 2px 0 0 16px; border-radius: 6px; background: #ececee; color: #86898d; display: flex; align-items: center; font-family: "Open Sans", sans-serif; font-size: 25.500px; }
.region { display: flex; align-items: center; margin-left: 55px; font-size: 28px; gap: 8px; height: 60px; padding-bottom: 4px; }
.region svg { width: 28px; height: 16px; margin-top: 6px; }
.head-icons { display: flex; margin-left: 41px; gap: 35px; }
.head-icons svg { width: 43.500px; height: 43.500px; }

.title-bar { height: 133px; flex: none; box-sizing: border-box; border-bottom: 3px solid #ececec; display: flex; align-items: center; justify-content: space-between; padding: 1px 52px 0 53px; }
h1 { margin: 0; font-size: 51.800px; font-weight: 400; color: #222428; }
.help { font-size: 26px; color: #2b6ca3; text-decoration: underline; text-underline-offset: 3px; margin-top: -3px; }

.content { height: 945px; flex: none; overflow: hidden; display: flex; background: #f8f8f8; }
.steps { width: 464px; box-sizing: border-box; padding: 38px 0 0 57px; display: flex; flex-direction: column; }
.step { height: 37px; flex: none; display: flex; align-items: center; gap: 15px; }
.step b { width: 37px; height: 37px; border-radius: 50%; background: #b5b5b5; color: #fff; font-size: 24px; line-height: 37px; text-align: center; }
.step a { font-size: 26px; line-height: 32px; color: #7a7a7c; text-decoration: underline; text-underline-offset: 4px; margin-top: -2px; }
.step.current b { background: #1a6fd8; font-weight: 400; }
.step.current a { color: #55565a; font-weight: 700; text-decoration: none; }
.link { width: 2px; height: 13.500px; flex: none; margin-left: 17.500px; background: #b5b5b5; }
.cards { width: 1465px; display: flex; flex-direction: column; }
.card { box-sizing: border-box; background: #fff; border: 1px solid #e6e6e6; flex: none; }
.files { height: 566px; border-top: 0; border-radius: 0 0 4px 4px; padding-left: 39px; }
.table { width: 1387px; box-sizing: border-box; margin-top: -70px; border: 2px solid #cfcfcf; border-top: 0; }
.row { height: 168px; box-sizing: border-box; display: flex; justify-content: space-between; border-bottom: 2px solid #cfcfcf; padding: 0 82px 0 78px; font-size: 32.700px; line-height: 40px; color: #303236; }
.row span { margin-top: 53px; }
.row:nth-child(3) span { margin-top: 54px; }
.trash { width: 31px; height: 36px; margin-top: 65.500px; }
.pager { height: 92px; box-sizing: border-box; display: flex; align-items: center; justify-content: flex-end; padding: 0 25px 3px 0; font-size: 26px; }
.pager svg { width: 18px; height: 30px; margin-top: 4px; }
.showing { margin-right: 15px; color: #66676a; }
.count { margin: 0 17px 0 17px; color: #3c3d40; }
.labels { height: 287px; margin-top: 26px; border-top: 4px solid #e8e8e8; border-radius: 4px; }
h2 { margin: 32px 0 0 39px; font-size: 39.500px; line-height: 46px; font-weight: 400; color: #16181c; }
.highlight { margin: 29px 0 0 23px; width: 1417px; height: 131px; box-sizing: border-box; border: 5px solid #ff2d17; }
.field-label { height: 39px; display: flex; align-items: center; padding-left: 11px; font-size: 24.800px; color: #6a6b6e; }
.field-label svg { width: 31px; height: 31px; margin: -1px 0 0 13px; }
.input { position: relative; width: 1393px; height: 71px; box-sizing: border-box; margin-left: 8px; border: 5px solid #7fa8dd; border-radius: 10px; display: flex; align-items: center; gap: 7.500px; padding-left: 8px; background: #fff; }
.tag { height: 46px; box-sizing: border-box; flex: none; border-radius: 4px; background: #f1f1f1; display: flex; align-items: center; justify-content: space-between; padding: 1px 14px 0 10px; font-size: 22.300px; color: #56575a; }
.tag:nth-child(3) { padding-left: 11px; }
.tag svg { width: 14px; height: 14px; }
.caret { width: 1px; height: 30px; background: #333; }
.spin { width: 17px; height: 28px; margin: 2px 12px 0 auto; }
.pointer { position: absolute; left: 586px; top: 27px; width: 40px; height: 47px; }
.scrollbar { width: 32px; margin-left: auto; background: #f0f0f0; display: flex; flex-direction: column; align-items: center; }
.scrollbar svg { width: 14px; height: 8px; margin-top: 13px; }
.thumb { width: 26px; height: 264px; margin-top: 629px; background: #c4c4c4; }
.thumb + svg { margin-top: 10px; }

.actions { height: 97px; flex: none; box-sizing: border-box; border-top: 1px solid #e6e6e6; overflow: hidden; display: flex; align-items: center; padding-left: 52px; }
.btn { width: 143px; height: 58px; flex: none; box-sizing: border-box; padding: 0; border: 2px solid #c6c6c6; border-radius: 5px; background: #f5f5f5; color: #46474b; font: 26px "Liberation Sans", Arial, sans-serif; }
.btn.primary { width: 94px; margin-left: 13px; background: #1a6ad8; border-color: #1a6ad8; color: #fff; }
.cancel { margin-left: 33px; font-size: 26px; color: #1f5d88; text-decoration: underline; text-underline-offset: 4px; }
.support { width: 83px; height: 83px; flex: none; box-sizing: border-box; align-self: flex-start; margin: 58px 37px 0 auto; border: 3px solid #2272c3; border-radius: 12px; padding: 11px 0 0 10px; background: #fff; }
.support svg { width: 57px; height: 57px; }
.footer { height: 53px; flex: none; box-sizing: border-box; border-top: 2px solid #cfcfcf; display: flex; align-items: center; gap: 33px; padding: 4px 37px 0 48px; font: 20.500px/30px "Open Sans", sans-serif; color: #808286; }
.footer a { color: #3f7fae; }
.copyright { margin-left: auto; }

.side { width: 82px; box-sizing: border-box; border-left: 2px solid #bdbdbd; display: flex; flex-direction: column; align-items: center; padding-left: 2px; background: #f8f8f8; }
.s-search { width: 32px; height: 32px; margin-top: 27px; }
.s-spark { width: 34px; height: 34px; margin-top: 47px; }
.s-office { width: 34px; height: 37px; margin-top: 41px; }
.s-outlook { width: 33px; height: 33px; margin-top: 43px; }
.s-plus { width: 23px; height: 23px; margin-top: 56px; }
.s-rule { width: 52px; height: 2px; background: #cfcfcf; margin-top: 803px; }
.s-toggle { width: 32px; height: 26px; margin-top: 30px; }
.s-gear { width: 33px; height: 33px; margin-top: 48px; }

.taskbar { height: 72px; flex: none; display: flex; background: linear-gradient(90deg, #2a2d2f 0%, #2e3034 30%, #34383e 55%, #3a4448 72%, #474849 88%, #4a4a4b 100%); }
.taskbar svg { width: 48px; height: 48px; }
.sys { width: 89.300px; display: flex; align-items: center; justify-content: center; }
.sys:nth-child(3) { margin-right: 4px; }
.sys svg { margin: 1px 2px 0 0; }
.app { width: 92.200px; display: flex; flex-direction: column; align-items: center; box-sizing: border-box; padding-top: 14px; }
.app svg { margin-right: 2px; }
.app::after { content: ""; width: 76px; height: 3px; margin-top: 7px; background: #6468c4; }
.focused { background: linear-gradient(90deg, #54565a 84px, #3a3c3f 84px, #3a3c3f 86px, #55575a 86px); }
.focused::after { width: 84px; align-self: flex-start; }
.glyph { font-family: "Open Sans", sans-serif; font-weight: 700; fill: #fff; text-anchor: middle; }
.g20 { font-size: 19px; }
.zoom { font-size: 13px; font-weight: 600; }
.badge { font-size: 20px; font-weight: 400; }
.cmd { font: 700 8px "Liberation Mono", monospace; fill: #e6e6e6; }
.clock { margin-left: auto; width: 116px; display: flex; flex-direction: column; align-items: center; padding-top: 3px; font: 22px/34px "Open Sans", sans-serif; color: #f4f4f4; }
</style>
